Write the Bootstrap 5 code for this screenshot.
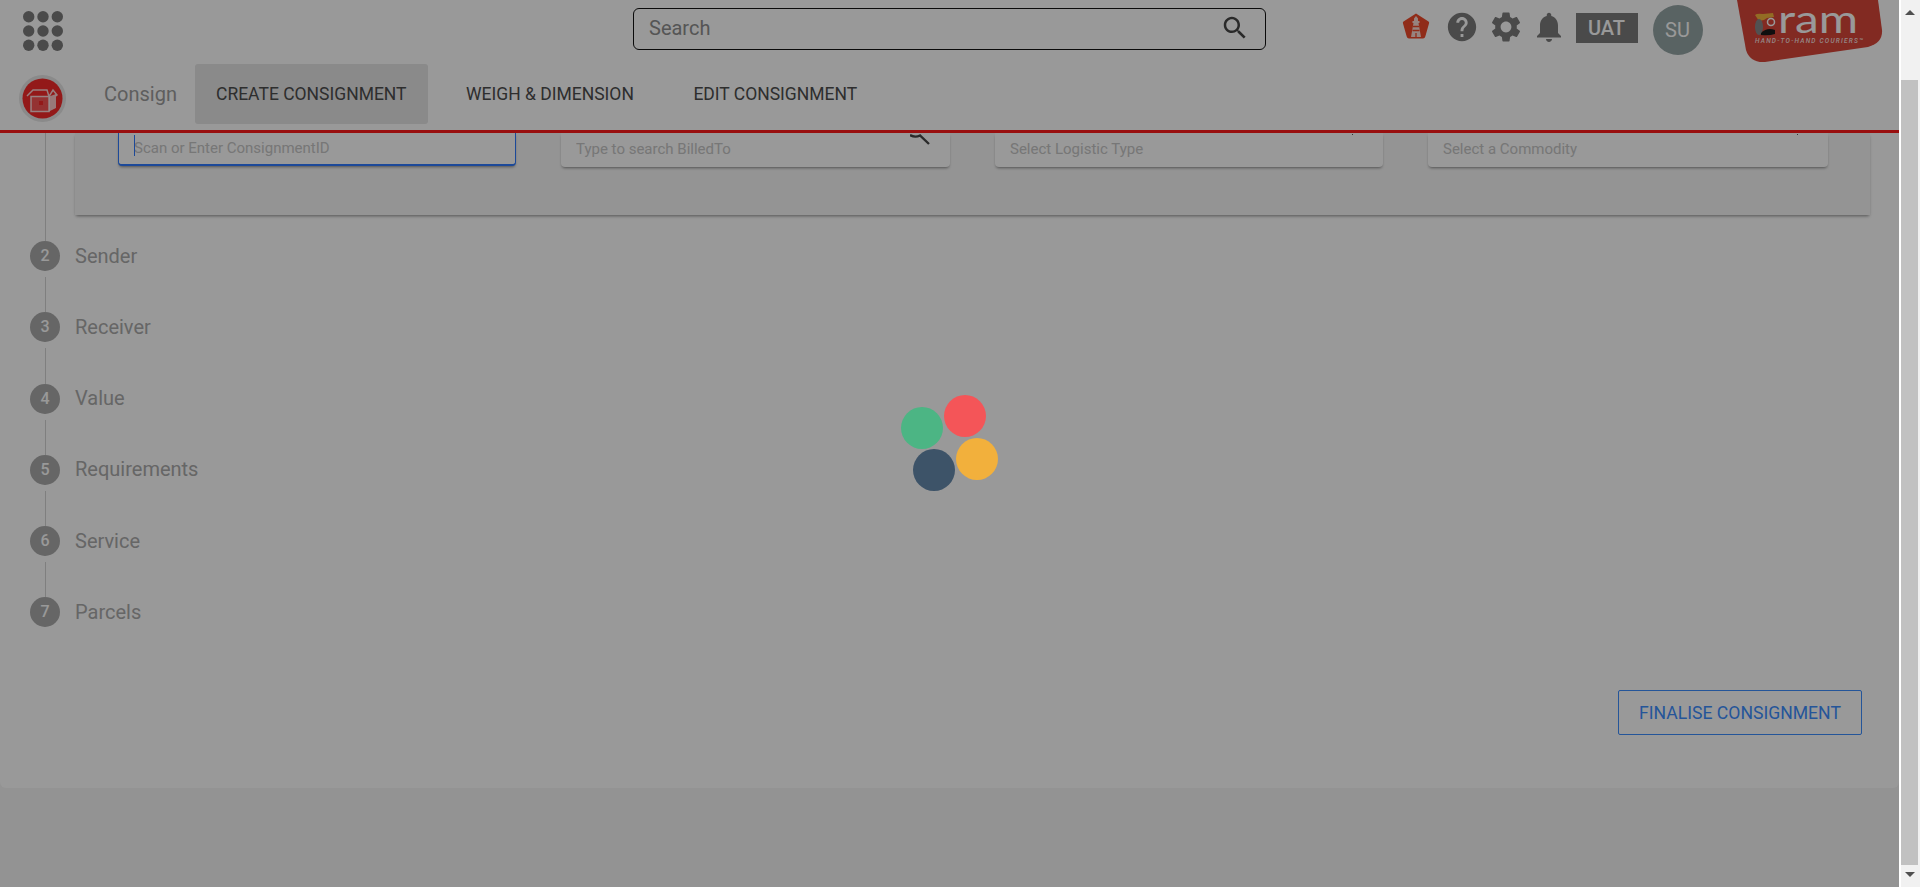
<!DOCTYPE html>
<html lang="en">
  <head>
    <meta charset="UTF-8" />
    <title>Consign</title>
    <meta name="viewport" content="width=device-width, initial-scale=1" />
    <link
      href="https://cdn.jsdelivr.net/npm/bootstrap@5.3.0/dist/css/bootstrap.min.css"
      rel="stylesheet"
    />
    <style>
      html, body { height: 887px; overflow: hidden; }
      body { font-family: Roboto, "Liberation Sans", sans-serif; background: #f5f5f5; }

      /* page column and fake scrollbar */
      .page-col { width: 1899px; height: 887px; }
      .scroll-col { width: 21px; height: 887px; background: #f1f1f1; border-left: 2px solid #fff; }
      .scroll-up { width: 0; height: 0; margin: 10px 0 0 4px; border: 5px solid transparent; border-top: 0; border-bottom-color: #505050; }
      .scroll-thumb { width: 17px; height: 785px; margin-top: 65px; background: #c1c1c1; }
      .scroll-down { width: 0; height: 0; margin: 7px 0 0 4px; border: 5px solid transparent; border-bottom: 0; border-top-color: #505050; }

      /* header */
      .top-row { height: 60px; }
      .app-grid { margin: 11px 0 0 23px; }
      .search-box { width: 633px; height: 42px; margin: 8px 0 0 570px; padding: 0 15px 2px; border: 1.5px solid #111; border-radius: 6px; }
      .search-box span { font-size: 20px; color: #8e8e8e; }
      .icon-light { margin: 13px 0 0 136px; }
      .icon-help { margin: 10px 0 0 15px; }
      .icon-gear { margin: 9px 0 0 9px; }
      .icon-bell { margin: 9px 0 0 7px; }
      .uat-tag { width: 62px; height: 30px; margin: 13px 0 0 8.5px; background: #7c7c7c; color: #fff; font-size: 20px; font-weight: 500; line-height: 30px; text-align: center; }
      .user-dot { width: 50px; height: 50px; margin: 5px 0 0 15px; background: #95a5a5; color: #fff; font-size: 20px; line-height: 50px; text-align: center; }
      .ram-logo { margin-left: 34px; }
      .ram-word { font-family: Lato, Roboto, sans-serif; font-size: 38px; font-weight: 400; }
      .ram-tag { font-family: Roboto, sans-serif; font-size: 6.5px; font-style: italic; font-weight: 500; }

      .tab-row { height: 70px; padding: 4px 0 0 19px; }
      .tab-logo { margin-top: 11px; }
      .tab-title { width: 91px; margin-left: 38px; font-size: 20px; line-height: 60px; color: #9d9d9d; }
      .tab-list { gap: 17.5px; }
      .tab-list .nav-link { height: 60px; padding: 0 21px; border-radius: 3px; font-size: 17.5px; line-height: 60px; color: #4d4d4d; }
      .tab-list .nav-link.active { background: #e6e6e6; color: #4d4d4d; }
      .red-rule { height: 3px; background: #ff1a1a; }

      /* first step, scrolled up under the header */
      .form-panel { width: 1795px; padding: 0 0 48px 43px; background: #f7f7f7; box-shadow: 0 2px 3px -1px rgba(0, 0, 0, .45); gap: 45px; }
      .rail-first { width: 1px; height: 108px; margin: 0 29px 0 45px; background: #d4d4d4; }
      .form-panel .form-control { height: 34px; padding: 0 15px 2px; border: 0; border-radius: 0 0 4px 4px; background: #fff; font-size: 15px; box-shadow: 0 2px 3px -1px rgba(0, 0, 0, .45); }
      .form-panel .form-control::placeholder { color: #c6c6c6; opacity: 1; }
      .form-panel .field-focus { height: 33px; border: solid #2f7bff; border-width: 0 1.5px 2px; }
      .field-a { width: 398px; }
      .field-b { width: 389px; }
      .field-c { width: 388px; }
      .field-d { width: 400px; }
      .text-caret { left: 16px; top: 2px; width: 1px; height: 21px; background: #2f7bff; }
      .glass-cut { right: 20px; top: 0; }
      .tick-cut { right: 30px; top: 1px; width: 1px; height: 1px; background: #555; }

      /* steps */
      .step-list { margin: 0 0 0 30px; }
      .step-line { width: 1px; height: 35.3px; margin: 6px 0 0 15px; background: #d4d4d4; }
      .step-num { width: 30px; height: 30px; background: #aaa; color: #fff; font-size: 16px; font-weight: 500; line-height: 30px; text-align: center; }
      .step-row { height: 30px; }
      .step-name { margin-left: 15px; padding-bottom: 1px; font-size: 20px; color: #aaa; }

      .main-panel { height: 655px; background: #fff; border-radius: 0 0 6px 6px; }
      .btn-finalise { width: 244px; height: 45px; padding: 0; border-radius: 2px; border-color: #3c8eff; color: #3c8eff; font-size: 17.6px; }
      .finalise-row { margin: 63px 37px 0 0; }

      /* loading screen */
      .load-mask { inset: 0; background: rgba(0, 0, 0, .4); }
      .load-dot { width: 42px; height: 42px; }
      .dot-green { left: 901px; top: 407px; background: #4cb584; }
      .dot-red { left: 944px; top: 395px; background: #f45558; }
      .dot-yellow { left: 956px; top: 438px; background: #f2b03c; }
      .dot-navy { left: 913px; top: 449px; background: #3d5368; }
    </style>
  </head>
  <body>
    <div class="d-flex">
      <div class="page-col position-relative">
        <header class="bg-white">
          <div class="top-row d-flex align-items-start">
            <svg class="app-grid" width="40" height="40" viewBox="0 0 40 40" fill="#7c7c7c">
              <circle cx="5.7" cy="5.7" r="5.7" /><circle cx="20" cy="5.7" r="5.7" /><circle cx="34.3" cy="5.7" r="5.7" />
              <circle cx="5.7" cy="20" r="5.7" /><circle cx="20" cy="20" r="5.7" /><circle cx="34.3" cy="20" r="5.7" />
              <circle cx="5.7" cy="34.3" r="5.7" /><circle cx="20" cy="34.3" r="5.7" /><circle cx="34.3" cy="34.3" r="5.7" />
            </svg>
            <div class="search-box d-flex align-items-center justify-content-between">
              <span>Search</span>
              <svg width="30" height="30" viewBox="0 0 24 24" fill="#464646"><path d="M15.5 14h-.79l-.28-.27C15.41 12.59 16 11.11 16 9.5 16 5.91 13.09 3 9.5 3S3 5.91 3 9.5 5.91 16 9.5 16c1.61 0 3.09-.59 4.23-1.57l.27.28v.79l5 4.99L20.49 19l-4.99-5zm-6 0C7.01 14 5 11.99 5 9.5S7.01 5 9.5 5 14 7.01 14 9.5 11.99 14 9.5 14z" /></svg>
            </div>
            <svg class="icon-light" width="28" height="26" viewBox="0 0 28 26">
              <path d="M14 0.5 26.5 8.5Q27.5 9.2 27 10.5L23.3 23.5Q22.8 25.5 21 25.5H7Q5.2 25.5 4.7 23.5L1 10.5Q.5 9.2 1.5 8.5Z" fill="#f04a2a" />
              <path d="M14 3 16 5.5V8H17.5V10H16.5L19 24H9L11.5 10H10.5V8H12V5.5Z" fill="#fff" fill-opacity=".8" />
              <path d="M11 13.5H17M10.5 17.5H17.5M14 20V24" stroke="#f04a2a" stroke-width="1.3" />
            </svg>
            <svg class="icon-help" width="34" height="34" viewBox="0 0 24 24" fill="#7c7c7c"><path d="M12 2C6.48 2 2 6.48 2 12s4.48 10 10 10 10-4.48 10-10S17.52 2 12 2zm1 17h-2v-2h2v2zm2.07-7.75l-.9.92C13.45 12.9 13 13.5 13 15h-2v-.5c0-1.1.45-2.1 1.17-2.83l1.24-1.26c.37-.36.59-.86.59-1.41 0-1.1-.9-2-2-2s-2 .9-2 2H8c0-2.21 1.79-4 4-4s4 1.79 4 4c0 .88-.36 1.68-.93 2.25z" /></svg>
            <svg class="icon-gear" width="36" height="36" viewBox="0 0 24 24" fill="#7c7c7c"><path d="M19.14 12.94c.04-.3.06-.61.06-.94 0-.32-.02-.64-.07-.94l2.03-1.58c.18-.14.23-.41.12-.61l-1.92-3.32c-.12-.22-.37-.29-.59-.22l-2.39.96c-.5-.38-1.03-.7-1.62-.94l-.36-2.54c-.04-.24-.24-.41-.48-.41h-3.84c-.24 0-.43.17-.47.41l-.36 2.54c-.59.24-1.13.57-1.62.94l-2.39-.96c-.22-.08-.47 0-.59.22L2.74 8.87c-.12.21-.08.47.12.61l2.03 1.58c-.05.3-.09.63-.09.94s.02.64.07.94l-2.03 1.58c-.18.14-.23.41-.12.61l1.92 3.32c.12.22.37.29.59.22l2.39-.96c.5.38 1.03.7 1.62.94l.36 2.54c.05.24.24.41.48.41h3.84c.24 0 .44-.17.47-.41l.36-2.54c.59-.24 1.13-.56 1.62-.94l2.39.96c.22.08.47 0 .59-.22l1.92-3.32c.12-.22.07-.47-.12-.61l-2.01-1.58zM12 15.6c-1.98 0-3.6-1.62-3.6-3.6s1.62-3.6 3.6-3.6 3.6 1.62 3.6 3.6-1.62 3.6-3.6 3.6z" /></svg>
            <svg class="icon-bell" width="36" height="36" viewBox="0 0 24 24" fill="#7c7c7c"><path d="M12 22c1.1 0 2-.9 2-2h-4c0 1.1.89 2 2 2zm6-6v-5c0-3.07-1.64-5.64-4.5-6.32V4c0-.83-.67-1.5-1.5-1.5s-1.5.67-1.5 1.5v.68C7.63 5.36 6 7.92 6 11v5l-2 2v1h16v-1l-2-2z" /></svg>
            <div class="uat-tag">UAT</div>
            <div class="user-dot rounded-circle">SU</div>
            <svg class="ram-logo" width="146" height="63" viewBox="0 0 146 63">
              <path d="M0 0H141L145 30Q146 43 131 47L28 62Q13 63 9 50Z" fill="#d9463a" />
              <path d="M18 15Q20 13 26 14L36 13 37 17 30 18 27 20 22 21Z" fill="#f5b53c" />
              <ellipse cx="22" cy="27" rx="4" ry="8" fill="#888" />
              <path d="M24 33Q30 27 38 30L38 34Q32 36 24 35Z" fill="#1a1a1a" />
              <circle cx="34" cy="22" r="3.5" fill="none" stroke="#fff" stroke-width="1.5" />
              <text class="ram-word" x="41" y="33" fill="#fff" textLength="80" lengthAdjust="spacingAndGlyphs">ram</text>
              <text class="ram-tag" x="18" y="43" fill="#fff" fill-opacity=".85" textLength="108">HAND-TO-HAND COURIERS™</text>
            </svg>
          </div>
          <div class="tab-row d-flex align-items-start">
            <svg class="tab-logo" width="47" height="47" viewBox="0 0 47 47">
              <circle cx="23.5" cy="23.5" r="23.5" fill="#e6e6e6" />
              <circle cx="23.5" cy="23.5" r="20" fill="#f52a2a" />
              <path d="M30 21.5 37 19V33L30 36.5Z" fill="#fff" fill-opacity=".75" />
              <path d="M12 21.5H30V36.5H12Z" fill="#fff" fill-opacity=".2" />
              <g fill="none" stroke="#fff" stroke-opacity=".8" stroke-width="1.5">
                <path d="M12 21.5H30V36.5H12ZM8 21 14 15H28L30 21.5 34 15 38 20 37 21" />
              </g>
              <rect x="20" y="26" width="4" height="4" fill="#f52a2a" />
            </svg>
            <div class="tab-title">Consign</div>
            <nav class="tab-list nav">
              <a class="nav-link active" href="#">CREATE CONSIGNMENT</a>
              <a class="nav-link" href="#">WEIGH &amp; DIMENSION</a>
              <a class="nav-link" href="#">EDIT CONSIGNMENT</a>
            </nav>
          </div>
          <div class="red-rule"></div>
        </header>

        <main class="main-panel">
          <div class="d-flex align-items-start">
            <div class="rail-first"></div>
            <div class="form-panel d-flex">
              <div class="field-a position-relative">
                <input class="form-control field-focus" placeholder="Scan or Enter ConsignmentID" />
                <span class="text-caret position-absolute"></span>
              </div>
              <div class="field-b position-relative">
                <input class="form-control" placeholder="Type to search BilledTo" />
                <svg class="glass-cut position-absolute" width="20" height="12" viewBox="0 0 20 12" fill="none" stroke="#464646" stroke-width="2.4"><path d="M0 2Q5 5 10 2.5L19 11" /></svg>
              </div>
              <div class="field-c position-relative">
                <input class="form-control" placeholder="Select Logistic Type" />
                <span class="tick-cut position-absolute"></span>
              </div>
              <div class="field-d position-relative">
                <input class="form-control" placeholder="Select a Commodity" />
                <span class="tick-cut position-absolute"></span>
              </div>
            </div>
          </div>

          <div class="step-list">
            <div class="step-row d-flex align-items-center"><div class="step-num rounded-circle">2</div><div class="step-name">Sender</div></div>
            <div class="step-line"></div>
            <div class="step-row d-flex align-items-center"><div class="step-num rounded-circle">3</div><div class="step-name">Receiver</div></div>
            <div class="step-line"></div>
            <div class="step-row d-flex align-items-center"><div class="step-num rounded-circle">4</div><div class="step-name">Value</div></div>
            <div class="step-line"></div>
            <div class="step-row d-flex align-items-center"><div class="step-num rounded-circle">5</div><div class="step-name">Requirements</div></div>
            <div class="step-line"></div>
            <div class="step-row d-flex align-items-center"><div class="step-num rounded-circle">6</div><div class="step-name">Service</div></div>
            <div class="step-line"></div>
            <div class="step-row d-flex align-items-center"><div class="step-num rounded-circle">7</div><div class="step-name">Parcels</div></div>
          </div>

          <div class="finalise-row d-flex justify-content-end">
            <button class="btn btn-outline-primary btn-finalise" type="button">FINALISE CONSIGNMENT</button>
          </div>
        </main>

        <div class="load-mask position-absolute"></div>
        <div class="load-dot dot-green position-absolute rounded-circle"></div>
        <div class="load-dot dot-red position-absolute rounded-circle"></div>
        <div class="load-dot dot-yellow position-absolute rounded-circle"></div>
        <div class="load-dot dot-navy position-absolute rounded-circle"></div>
      </div>

      <div class="scroll-col">
        <div class="scroll-up"></div>
        <div class="scroll-thumb"></div>
        <div class="scroll-down"></div>
      </div>
    </div>

    <script src="https://cdn.jsdelivr.net/npm/bootstrap@5.3.0/dist/js/bootstrap.bundle.min.js"></script>
  </body>
</html>
